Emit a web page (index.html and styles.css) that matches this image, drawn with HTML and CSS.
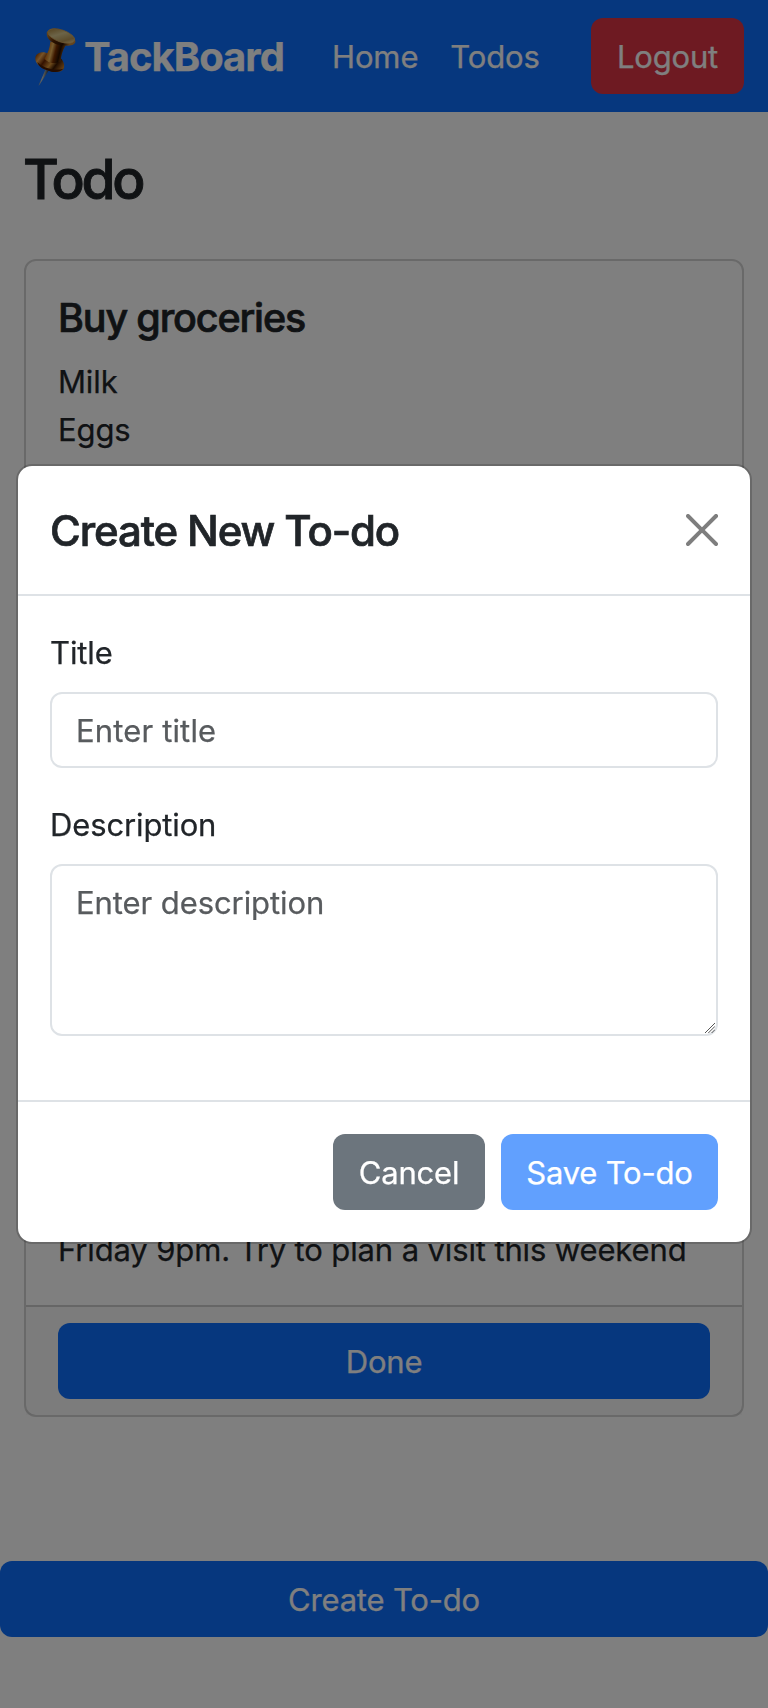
FILE: index.html
```html
<!DOCTYPE html>
<html lang="en">
<head>
<meta charset="utf-8">
<title>TackBoard</title>
<link rel="stylesheet" href="styles.css">
</head>
<body>
<nav class="navbar">
  <a class="brand">
    <svg class="brand-pin" viewBox="42 30 126 180" aria-hidden="true">
      <defs>
        <linearGradient id="needle" x1="0" x2="1" y1="0" y2=".3"><stop offset="0" stop-color="#3a4650"/><stop offset=".5" stop-color="#c0c8c8"/><stop offset="1" stop-color="#202830"/></linearGradient>
        <linearGradient id="stem" x1="0" x2="1" y1="0" y2=".25"><stop offset="0" stop-color="#3a1200"/><stop offset=".22" stop-color="#c46a14"/><stop offset=".42" stop-color="#f0b85c"/><stop offset=".6" stop-color="#7a3000"/><stop offset=".8" stop-color="#281000"/><stop offset="1" stop-color="#a85a10"/></linearGradient>
        <linearGradient id="base" x1="0" x2="1" y1=".2" y2=".7"><stop offset="0" stop-color="#9a4a08"/><stop offset=".16" stop-color="#f0a850"/><stop offset=".35" stop-color="#6a2400"/><stop offset=".58" stop-color="#e09838"/><stop offset=".75" stop-color="#3a1600"/><stop offset="1" stop-color="#c07828"/></linearGradient>
        <linearGradient id="rim" x1="0" x2="1" y1="0" y2=".4"><stop offset="0" stop-color="#e8a848"/><stop offset=".45" stop-color="#5a2400"/><stop offset=".8" stop-color="#2c1000"/><stop offset="1" stop-color="#c88838"/></linearGradient>
        <linearGradient id="top" x1="0" x2="1" y1=".2" y2=".8"><stop offset="0" stop-color="#a88038"/><stop offset=".4" stop-color="#d8c890"/><stop offset=".75" stop-color="#b89858"/><stop offset="1" stop-color="#f8dc98"/></linearGradient>
      </defs>
      <path d="M76 162 85 165 58 207 55 209Z" fill="url(#needle)"/>
      <path d="M46 128C45 113 62 106 77 110L112 121C127 126 135 143 132 155C128 169 107 170 90 165C67 160 45 143 46 128Z" fill="url(#base)"/>
      <path d="M52 138C67 155 101 166 130 158C119 171 99 169 85 164C68 160 56 151 52 138Z" fill="#4a1a00"/>
      <path d="M91 76 137 88C127 104 123 120 122 136C108 146 83 141 73 128C84 112 90 95 91 76Z" fill="url(#stem)"/>
      <path d="M81 49C77 62 89 77 107 84C130 92 162 92 166 79C169 64 140 43 112 38C96 36 84 40 81 49Z" fill="url(#rim)"/>
      <ellipse cx="124" cy="60" rx="42" ry="18" transform="rotate(19 124 60)" fill="url(#top)" stroke="#d8a860" stroke-width="2"/>
    </svg>
    <span class="brand-name">TackBoard</span>
  </a>
  <div class="nav-links">
    <a class="nav-home">Home</a>
    <a class="nav-todos">Todos</a>
  </div>
  <button class="btn btn-danger">Logout</button>
</nav>

<main class="page">
  <h1 class="page-title">Todo</h1>
  <div class="todo-list">
    <section class="card card-first">
      <div class="card-body">
        <h2 class="card-title">Buy groceries</h2>
        <p class="card-text">Milk<br>Eggs<br>Bread</p>
      </div>
    </section>
    <section class="card card-last">
      <div class="card-body card-body-end">
        <p class="card-text visit-text">Friday 9pm. Try to plan a visit this weekend</p>
      </div>
      <div class="card-footer">
        <button class="btn btn-primary btn-done">Done</button>
      </div>
    </section>
  </div>
</main>
<button class="btn btn-primary btn-create">Create To-do</button>

<div class="backdrop">
  <div class="modal" role="dialog">
    <div class="modal-header">
      <h3 class="modal-title">Create New To-do</h3>
      <svg class="close" viewBox="0 0 16 16" aria-label="Close"><path d="M.293.293a1 1 0 0 1 1.414 0L8 6.586 14.293.293a1 1 0 1 1 1.414 1.414L9.414 8l6.293 6.293a1 1 0 0 1-1.414 1.414L8 9.414l-6.293 6.293a1 1 0 0 1-1.414-1.414L6.586 8 .293 1.707a1 1 0 0 1 0-1.414z"/></svg>
    </div>
    <div class="modal-body">
      <div class="field">
        <label for="title">Title</label>
        <input class="control control-title" id="title" type="text" placeholder="Enter title">
      </div>
      <div class="field">
        <label for="desc">Description</label>
        <div class="area-wrap">
          <textarea class="control area" id="desc" placeholder="Enter description"></textarea>
          <svg class="grip" viewBox="0 0 10 10"><path d="M0 10 10 0M3.3 10 10 3.3M6.6 10 10 6.6" stroke="#555" stroke-width="1" fill="none"/></svg>
        </div>
      </div>
    </div>
    <div class="modal-footer">
      <button class="btn btn-secondary">Cancel</button>
      <button class="btn btn-primary btn-save">Save To-do</button>
    </div>
  </div>
</div>
</body>
</html>
```
FILE: styles.css
```css
* { box-sizing: border-box; }
html, body { height: 1708px; overflow: hidden; }
body {
  margin: 0;
  background: #fff;
  color: #212529;
  font: 400 31px/48px Inter, "Liberation Sans", sans-serif;
  letter-spacing: -.13px;
  -webkit-text-stroke: .25px;
}
h1, h2, h3, p { margin: 0; }

.btn {
  height: 76px;
  padding: 2px 0 0;
  border: 0;
  border-radius: 12px;
  color: #fff;
  font: inherit;
  letter-spacing: -.2px;
  white-space: nowrap;
}
.btn-primary { background: #0d6efd; }
.btn-danger { background: #dc3545; width: 153px; margin-left: auto; }
.btn-secondary { background: #6c757d; width: 152px; }
.btn-save { width: 217px; opacity: .65; }
.btn-done { display: block; width: 100%; }
.btn-create { display: block; width: 100%; margin-top: 144px; }

.navbar {
  display: flex;
  align-items: center;
  height: 112px;
  padding: 0 24px 0 34px;
  background: #0d6efd;
  color: #fff;
}
.brand { display: flex; align-items: center; width: 298px; gap: 8px; }
.brand-pin { width: 42px; height: 60px; flex: none; }
.brand-name { padding-top: 2px; font-size: 40px; font-weight: 700; letter-spacing: -1px; }
.nav-links { display: flex; gap: 32px; padding-top: 2px; }

.page { padding: 0 24px; }
.page-title {
  height: 147px;
  padding-top: 34px;
  font-size: 55px;
  font-weight: 500;
  line-height: 66px;
  letter-spacing: -3.2px;
  text-indent: -1px;
  -webkit-text-stroke-width: .9px;
}
.todo-list { display: flex; flex-direction: column; gap: 32px; height: 1158px; }
.card {
  display: flex;
  flex-direction: column;
  border: 2px solid rgba(0, 0, 0, .175);
  border-radius: 12px;
}
.card-first { height: 560px; }
.card-last { flex: 1; }
.card-body { flex: 1; padding: 33px 32px 31px; }
.card-body-end { display: flex; align-items: flex-end; white-space: nowrap; }
.card-title {
  margin-bottom: 16px;
  font-size: 39.5px;
  font-weight: 500;
  line-height: 48px;
  letter-spacing: -1.15px;
  -webkit-text-stroke-width: .7px;
}
.card-footer {
  padding: 16px 32px;
  border-top: 2px solid rgba(0, 0, 0, .175);
  background: rgba(33, 37, 41, .03);
}

.backdrop {
  position: fixed;
  inset: 0;
  display: flex;
  align-items: center;
  justify-content: center;
  background: rgba(0, 0, 0, .5);
}
.modal {
  width: 736px;
  border: 2px solid rgba(0, 0, 0, .175);
  border-radius: 16px;
  background: #fff;
  background-clip: padding-box;
}
.modal-header {
  display: flex;
  align-items: center;
  justify-content: space-between;
  height: 130px;
  padding: 0 32px;
  border-bottom: 2px solid #dee2e6;
}
.modal-title {
  padding-top: 2px;
  font-size: 42px;
  font-weight: 500;
  line-height: 64px;
  letter-spacing: -1.12px;
  white-space: nowrap;
  -webkit-text-stroke-width: .7px;
}
.close { width: 32px; height: 32px; opacity: .5; }
.modal-body { padding: 32px; height: 504px; }
.field { margin-bottom: 32px; }
.field label { display: block; padding-top: 1px; margin-bottom: 15px; }
.control {
  display: block;
  width: 100%;
  height: 76px;
  padding: 13px 24px 11px;
  border: 2px solid #dee2e6;
  border-radius: 12px;
  background: #fff;
  color: #212529;
  font: inherit;
  letter-spacing: -.08px;
}
.control-title { padding: 12px 24px; letter-spacing: .15px; }
.control::placeholder { color: #585b5e; opacity: 1; }
.area-wrap { position: relative; }
.area { height: 172px; resize: none; }
.grip { position: absolute; right: 3px; bottom: 3px; width: 10px; height: 10px; }
.modal-footer {
  display: flex;
  justify-content: flex-end;
  gap: 16px;
  padding: 32px;
  border-top: 2px solid #dee2e6;
}
```
